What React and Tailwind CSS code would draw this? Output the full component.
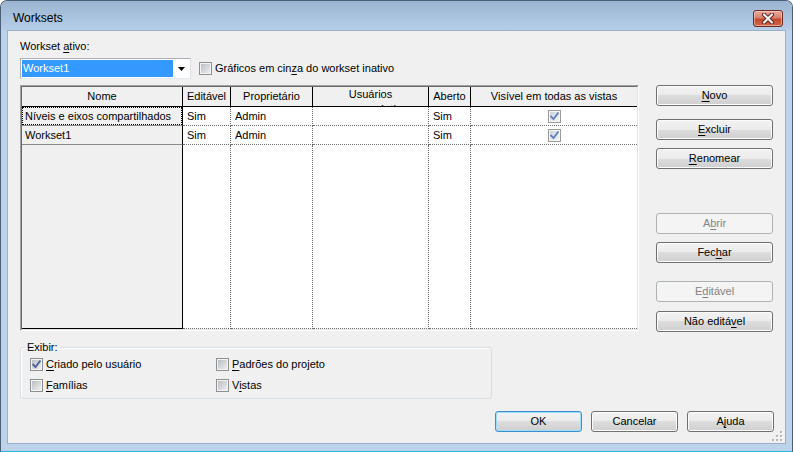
import React from "react";

const U = ({ children }) => (
  <span className="underline underline-offset-[2px]">{children}</span>
);

function Btn({ children, disabled = false, isDefault = false, className = "" }) {
  const look = disabled
    ? "border-[#adb2b5] bg-[#f4f4f4] text-[#838383]"
    : isDefault
    ? "border-[#3c8fd0] bg-[linear-gradient(to_bottom,#f2f2f2_0%,#ebebeb_50%,#dddddd_50%,#cfcfcf_100%)] shadow-[inset_0_0_0_1px_#9fdcf8]"
    : "border-[#707070] bg-[linear-gradient(to_bottom,#f2f2f2_0%,#ebebeb_50%,#dddddd_50%,#cfcfcf_100%)] shadow-[inset_0_0_0_1px_#fcfcfc]";
  return (
    <div
      className={`h-[21px] flex items-center justify-center rounded-[3px] border text-[11px] leading-[13px] ${look} ${className}`}
    >
      <span>{children}</span>
    </div>
  );
}

function Check({ checked = false, dim = false }) {
  return (
    <span
      className={`inline-flex w-[13px] h-[13px] shrink-0 border p-[1px] ${
        dim ? "border-[#9a9a9a] bg-[#f5f5f5]" : "border-[#8e8f8f] bg-[#f4f4f4]"
      }`}
    >
      <span
        className={`flex-1 flex items-center justify-center ${
          dim
            ? "bg-[linear-gradient(135deg,#cdd3dc,#f4f5f7)]"
            : "bg-[linear-gradient(135deg,#b9bdc4,#eeeeef)]"
        }`}
      >
        {checked && (
          <svg width="9" height="9" viewBox="0 0 9 9">
            <path
              d="M1.2 4.6 L3.5 7 L7.9 1.3"
              fill="none"
              stroke={dim ? "#5f7fbf" : "#4a5f97"}
              strokeWidth="1.8"
              strokeLinecap="square"
            />
          </svg>
        )}
      </span>
    </span>
  );
}

function CloseBtn() {
  return (
    <div className="w-[30px] h-[17px] rounded-[3px] border border-[#6e2b23] bg-[linear-gradient(to_bottom,#e9a99b_0%,#d7806e_45%,#c2472f_55%,#cf6a4c_100%)] shadow-[inset_0_0_0_1px_rgba(255,220,210,0.5)] flex items-center justify-center">
      <svg width="14" height="11" viewBox="0 0 14 11">
        <path d="M3 1.5 L11 9.5 M11 1.5 L3 9.5" stroke="#5b2119" strokeWidth="4" strokeLinecap="round" />
        <path d="M3 1.5 L11 9.5 M11 1.5 L3 9.5" stroke="#f3f3f3" strokeWidth="2.2" strokeLinecap="round" />
      </svg>
    </div>
  );
}

function Col({ w, head, cells, last = false, twoLine = false }) {
  return (
    <div className={`${w} shrink-0 flex flex-col`}>
      <div
        className={
          last
            ? "h-[20px] shrink-0 overflow-hidden flex items-center justify-center bg-[#f0f0f0] border-b border-b-black whitespace-nowrap"
            : twoLine
            ? "h-[20px] shrink-0 overflow-hidden flex flex-col items-center leading-[15px] bg-[#f0f0f0] border-b border-b-black border-r border-r-black whitespace-nowrap"
            : "h-[20px] shrink-0 overflow-hidden flex items-center justify-center bg-[#f0f0f0] border-b border-b-black border-r border-r-black whitespace-nowrap"
        }
      >
        {twoLine ? (
          <>
            <span>Usuários</span>
            <span>com empréstimo</span>
          </>
        ) : (
          head
        )}
      </div>
      {cells.map((c, i) => (
        <div
          key={i}
          className={
            last
              ? "h-[19px] shrink-0 flex items-center justify-center bg-white border-b border-dotted border-b-[#6f6f6f]"
              : "h-[19px] shrink-0 flex items-center pl-[4px] bg-white border-b border-r border-dotted border-b-[#6f6f6f] border-r-[#6f6f6f]"
          }
        >
          {c}
        </div>
      ))}
      <div
        className={
          last
            ? "flex-1 bg-white border-b border-dotted border-b-[#6f6f6f]"
            : "flex-1 bg-white border-b border-r border-dotted border-b-[#6f6f6f] border-r-[#6f6f6f]"
        }
      />
    </div>
  );
}

export default function App() {
  return (
    <div className="w-[793px] h-[452px] bg-white text-[11px] leading-[13px] text-black font-['Liberation_Sans',Arial,sans-serif]">
      <div className="w-full h-full flex flex-col rounded-t-[7px] border border-[#4b5f76] border-b-[#27b4d8] bg-[#bcd3eb] overflow-hidden">
        {/* Title bar */}
        <div className="h-[29px] shrink-0 flex items-start justify-between pl-[12px] pr-[9px] bg-[linear-gradient(to_bottom,#9bb4d1,#b6cee8)]">
          <span className="mt-[10px] text-[12px] leading-[14px]">Worksets</span>
          <div className="mt-[9px]">
            <CloseBtn />
          </div>
        </div>

        {/* Client area */}
        <div className="relative flex-1 mx-[6px] mb-[7px] bg-[#f0f0f0] border border-[#9bb0c8] flex flex-col pl-[12px] pr-[11px] pt-[9px]">
          <div>
            Workset <U>a</U>tivo:
          </div>

          <div className="mt-[5px] flex items-center">
            <div className="w-[171px] h-[21px] flex items-center bg-white border border-[#abadb3] border-b-[#e3e9ef] border-r-[#dbdfe6] p-[1px]">
              <div className="w-[151px] h-full flex items-center bg-[#3399ff] text-white pl-[1px]">
                Workset1
              </div>
              <div className="flex-1 flex items-center justify-center">
                <svg width="7" height="4" viewBox="0 0 7 4">
                  <polygon points="0,0 7,0 3.5,4" fill="#000" />
                </svg>
              </div>
            </div>
            <div className="ml-[8px]">
              <Check />
            </div>
            <span className="ml-[3px]">
              Gráficos em cin<U>z</U>a do workset inativo
            </span>
          </div>

          <div className="mt-[6px] flex items-start gap-[17px]">
            {/* Table */}
            <div className="w-[619px] h-[246px] shrink-0 border border-t-[#a0a0a0] border-l-[#a0a0a0] border-r-[#ffffff] border-b-[#ffffff]">
              <div className="w-full h-full flex border border-t-[#6a6a6a] border-l-[#6a6a6a] border-r-[#e3e3e3] border-b-[#e3e3e3] bg-white overflow-hidden">
                {/* Nome column */}
                <div className="w-[161px] shrink-0 flex flex-col">
                  <div className="h-[20px] shrink-0 flex items-center justify-center bg-[#f0f0f0] border-b border-b-black border-r border-r-black">
                    Nome
                  </div>
                  <div className="h-[19px] shrink-0 flex bg-[#f0f0f0] border-b border-b-[#8a8a8a] border-r border-r-black">
                    <div className="flex-1 flex items-center border border-dotted border-black pl-[2px] whitespace-nowrap overflow-hidden">
                      Níveis e eixos compartilhados
                    </div>
                  </div>
                  <div className="h-[19px] shrink-0 flex items-center pl-[3px] bg-[#f0f0f0] border-b border-b-[#8a8a8a] border-r border-r-black">
                    Workset1
                  </div>
                  <div className="flex-1 bg-[#f0f0f0] border-b border-b-black border-r border-r-black" />
                </div>
                <Col w="w-[48px]" head="Editável" cells={["Sim", "Sim"]} />
                <Col w="w-[82px]" head="Proprietário" cells={["Admin", "Admin"]} />
                <Col w="w-[116px]" head="" twoLine cells={["", ""]} />
                <Col w="w-[42px]" head="Aberto" cells={["Sim", "Sim"]} />
                <Col
                  w="w-[166px]"
                  head="Visível em todas as vistas"
                  last
                  cells={[<Check key="a" checked dim />, <Check key="b" checked dim />]}
                />
              </div>
            </div>

            {/* Right buttons */}
            <div className="w-[117px] shrink-0 flex flex-col">
              <Btn>
                <U>N</U>ovo
              </Btn>
              <Btn className="mt-[13px]">
                <U>E</U>xcluir
              </Btn>
              <Btn className="mt-[8px]">
                <U>R</U>enomear
              </Btn>
              <Btn disabled className="mt-[44px]">
                A<U>b</U>rir
              </Btn>
              <Btn className="mt-[8px]">
                Fec<U>h</U>ar
              </Btn>
              <Btn disabled className="mt-[18px]">
                E<U>d</U>itável
              </Btn>
              <Btn className="mt-[9px]">
                Não editá<U>v</U>el
              </Btn>
            </div>
          </div>

          {/* Exibir group */}
          <fieldset className="mt-[9px] w-[472px] border border-[#d5dfe5] rounded-[3px] shadow-[inset_1px_1px_0_#ffffff] pb-[2px]">
            <legend className="ml-[4px] px-[2px] leading-[13px]">Exibir:</legend>
            <div className="flex pl-[9px]">
              <div className="w-[186px] flex flex-col">
                <div className="h-[21px] flex items-center">
                  <Check checked />
                  <span className="ml-[3px]">
                    <U>C</U>riado pelo usuário
                  </span>
                </div>
                <div className="h-[21px] flex items-center">
                  <Check />
                  <span className="ml-[3px]">
                    <U>F</U>amílias
                  </span>
                </div>
              </div>
              <div className="flex flex-col">
                <div className="h-[21px] flex items-center">
                  <Check />
                  <span className="ml-[3px]">
                    <U>P</U>adrões do projeto
                  </span>
                </div>
                <div className="h-[21px] flex items-center">
                  <Check />
                  <span className="ml-[3px]">
                    V<U>i</U>stas
                  </span>
                </div>
              </div>
            </div>
          </fieldset>

          {/* Bottom buttons */}
          <div className="mt-[12px] flex justify-end gap-[9px]">
            <Btn isDefault className="w-[87px]">
              OK
            </Btn>
            <Btn className="w-[87px]">Cancelar</Btn>
            <Btn className="w-[87px]">
              A<U>j</U>uda
            </Btn>
          </div>

          {/* Resize grip */}
          <svg className="absolute right-[2px] bottom-[2px]" width="11" height="11" viewBox="0 0 11 11">
            <g fill="#ffffff">
              <rect x="9" y="2" width="2" height="2" />
              <rect x="9" y="6" width="2" height="2" />
              <rect x="5" y="6" width="2" height="2" />
              <rect x="9" y="10" width="2" height="1" />
              <rect x="5" y="10" width="2" height="1" />
              <rect x="1" y="10" width="2" height="1" />
            </g>
            <g fill="#b2b7bd">
              <rect x="8" y="1" width="2" height="2" />
              <rect x="8" y="5" width="2" height="2" />
              <rect x="4" y="5" width="2" height="2" />
              <rect x="8" y="9" width="2" height="2" />
              <rect x="4" y="9" width="2" height="2" />
              <rect x="0" y="9" width="2" height="2" />
            </g>
          </svg>
        </div>
      </div>
    </div>
  );
}
